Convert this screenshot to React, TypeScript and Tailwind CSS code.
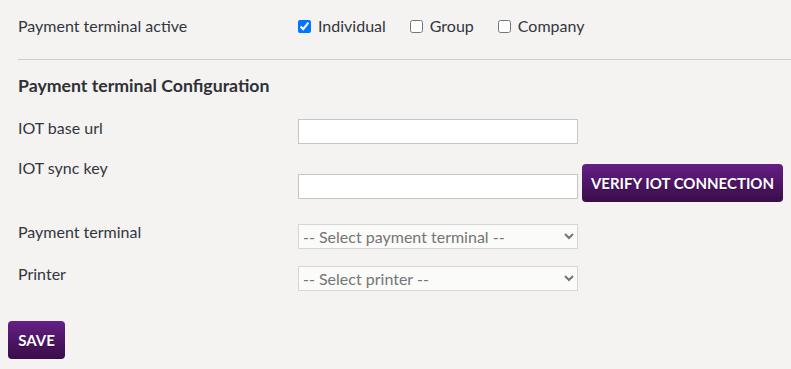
import React from "react"

const labelCls = "w-[280px] shrink-0 text-[16px] leading-[20px] text-[#32363c]"
const inputCls = "w-[280px] h-[25px] border border-[#c6c6c6] bg-white px-1 text-[16px] outline-none"
const selectCls = "w-[280px] h-[25px] border border-[#d6d6d6] bg-[#fbfbfa] pl-0 text-[16px] text-[#757575] outline-none"
const btnCls = "rounded-[4px] bg-gradient-to-b from-[#661f86] to-[#390d49] text-white font-bold text-[15px] uppercase [text-shadow:0_1px_1px_rgba(0,0,0,0.4)]"

function Check({ label, checked }: { label: string; checked?: boolean }) {
  return (
    <label className="flex items-center gap-[7px]">
      <input type="checkbox" defaultChecked={checked} className="m-0 w-[13px] h-[13px]" />
      <span>{label}</span>
    </label>
  )
}

export default function App() {
  return (
    <div className="min-h-screen w-[791px] h-[369px] bg-[#f4f3f2] overflow-hidden" style={{ fontFamily: "Lato, 'Open Sans', sans-serif" }}>
      <div className="pl-[18px] pt-[16px]">
        <div className="flex">
          <div className={labelCls}>Payment terminal active</div>
          <div className="flex gap-[24px] text-[16px] leading-[20px] text-[#32363c]">
            <Check label="Individual" checked />
            <Check label="Group" />
            <Check label="Company" />
          </div>
        </div>

        <div className="mt-[23px] h-px bg-[#cbcbcb]" />

        <h2 className="mt-[14px] text-[17.7px] leading-[24px] font-bold text-[#2e3135]">Payment terminal Configuration</h2>

        <div className="mt-[20px] flex items-start">
          <div className={labelCls}>IOT base url</div>
          <input type="text" className={`${inputCls} mt-[1px]`} />
        </div>

        <div className="mt-[14px] flex items-start">
          <div className={labelCls}>IOT sync key</div>
          <div className="mt-[6px] flex items-end gap-[4px]">
            <input type="text" className={`${inputCls} mb-[3px]`} />
            <button className={`${btnCls} h-[38px] w-[201px]`}>Verify IOT connection</button>
          </div>
        </div>

        <div className="mt-[20px] flex items-start">
          <div className={labelCls}>Payment terminal</div>
          <select className={`${selectCls} mt-[2px]`} defaultValue="">
            <option value="">-- Select payment terminal --</option>
          </select>
        </div>

        <div className="mt-[15px] flex items-start">
          <div className={labelCls}>Printer</div>
          <select className={`${selectCls} mt-[2px]`} defaultValue="">
            <option value="">-- Select printer --</option>
          </select>
        </div>
      </div>

      <div className="pl-[8px] mt-[30px]">
        <button className={`${btnCls} h-[38px] w-[57px]`}>Save</button>
      </div>
    </div>
  )
}
